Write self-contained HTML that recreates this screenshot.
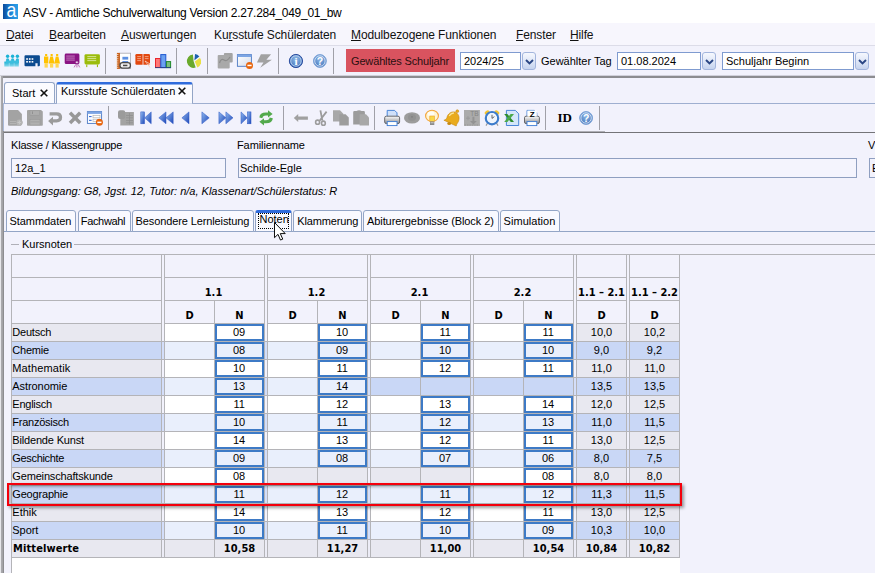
<!DOCTYPE html>
<html lang="de"><head><meta charset="utf-8"><title>ASV - Amtliche Schulverwaltung</title>
<style>
html,body{margin:0;padding:0;}
body{width:875px;height:573px;position:relative;overflow:hidden;background:#f2f2fc;font-family:"Liberation Sans",sans-serif;font-size:11px;color:#000;}
div{position:absolute;box-sizing:border-box;}
svg{position:absolute;overflow:visible;}
.t{white-space:nowrap;line-height:13px;height:13px;}
.m{white-space:nowrap;font-size:12px;line-height:14px;color:#111;letter-spacing:-0.12px;}
.m u{text-decoration-thickness:1px;text-underline-offset:1px;}
.b{white-space:nowrap;font-family:"DejaVu Sans Condensed","Liberation Sans",sans-serif;font-weight:bold;font-size:11px;line-height:13px;text-align:center;}
.c{white-space:nowrap;text-align:center;line-height:13px;font-size:11px;}
.sep{width:1px;background:#a0a0a8;}
</style></head><body>

<div style="left:0px;top:0px;width:875px;height:23px;background:#fff;"></div>
<div style="left:3px;top:4px;width:15px;height:15px;background:linear-gradient(90deg,#0b4c9c,#1f86d8 55%,#2ba0e6);"></div>
<div style="left:2.5px;top:-0.5px;width:17px;height:20px;color:#fff;font-size:21px;line-height:20px;text-align:center;transform:scaleX(0.84);">a</div>
<div class="t" style="left:23px;top:6px;font-size:12px;line-height:15px;height:15px;letter-spacing:-0.265px;color:#000;">ASV - Amtliche Schulverwaltung Version 2.27.284_049_01_bw</div>
<div style="left:0px;top:23px;width:875px;height:23px;background:#f7f6fd;"></div>
<div style="left:0px;top:45px;width:875px;height:1px;background:#dcdce8;"></div>
<div class="m" style="left:6px;top:28px;"><u>D</u>atei</div>
<div class="m" style="left:49px;top:28px;"><u>B</u>earbeiten</div>
<div class="m" style="left:121px;top:28px;"><u>A</u>uswertungen</div>
<div class="m" style="left:214px;top:28px;">Ku<u>r</u>sstufe Schülerdaten</div>
<div class="m" style="left:351px;top:28px;"><u>M</u>odulbezogene Funktionen</div>
<div class="m" style="left:516px;top:28px;"><u>F</u>enster</div>
<div class="m" style="left:570px;top:28px;"><u>H</u>ilfe</div>
<div style="left:0px;top:46px;width:875px;height:30px;background:#f2f2fc;"></div>
<div class="sep" style="left:105px;top:48px;width:1px;height:26px;"></div>
<div class="sep" style="left:176px;top:48px;width:1px;height:26px;"></div>
<div class="sep" style="left:207px;top:48px;width:1px;height:26px;"></div>
<div class="sep" style="left:278px;top:48px;width:1px;height:26px;"></div>
<div class="sep" style="left:333px;top:48px;width:1px;height:26px;"></div>
<svg style="left:0;top:0" width="875" height="80" viewBox="0 0 875 80"><defs><linearGradient id="gc" x1="0" y1="0" x2="0" y2="1"><stop offset="0" stop-color="#18afd4"/><stop offset="1" stop-color="#8fdaec"/></linearGradient><linearGradient id="gy" x1="0" y1="0" x2="0" y2="1"><stop offset="0" stop-color="#ffc200"/><stop offset="0.65" stop-color="#ffc200"/><stop offset="1" stop-color="#ffe38a"/></linearGradient><radialGradient id="gi" cx="0.5" cy="0.35" r="0.7"><stop offset="0" stop-color="#8db8e6"/><stop offset="1" stop-color="#3f6fb8"/></radialGradient><linearGradient id="gw" x1="0" y1="0" x2="1" y2="1"><stop offset="0" stop-color="#ffffff"/><stop offset="1" stop-color="#d4dcec"/></linearGradient><linearGradient id="gb" x1="0" y1="0" x2="1" y2="1"><stop offset="0" stop-color="#8fb8ee"/><stop offset="1" stop-color="#1f48b8"/></linearGradient><linearGradient id="gp" x1="0" y1="0" x2="0" y2="1"><stop offset="0" stop-color="#fdfdfd"/><stop offset="1" stop-color="#8a8a8e"/></linearGradient></defs><circle cx="7.6" cy="56.3" r="1.7" fill="#1cb2d6"/><circle cx="7.6" cy="59.9" r="1.6" fill="#2bb8da"/><circle cx="12.6" cy="56.3" r="1.7" fill="#1cb2d6"/><circle cx="12.6" cy="59.9" r="1.6" fill="#2bb8da"/><circle cx="17.4" cy="56.3" r="1.7" fill="#1cb2d6"/><circle cx="17.4" cy="59.9" r="1.6" fill="#2bb8da"/><rect x="4.3" y="61.6" width="4.6" height="5" fill="url(#gc)"/><rect x="9.3" y="61.6" width="4.6" height="5" fill="url(#gc)"/><rect x="14.2" y="61.6" width="4.6" height="5" fill="url(#gc)"/><rect x="5.8" y="60.5" width="13.2" height="2.4" fill="#3dbfde"/><path d="M25.6 55.2 H38.8 Q39.9 55.2 39.9 56.3 V65.2 Q39.9 66.3 38.8 66.3 H37.6 V63.2 H35.4 V66.3 H25.6 Q24.5 66.3 24.5 65.2 V56.3 Q24.5 55.2 25.6 55.2 Z" fill="#0c4b90"/><rect x="26.2" y="58.2" width="1.7" height="1.6" fill="#fff"/><rect x="28.9" y="58.2" width="1.7" height="1.6" fill="#fff"/><rect x="31.6" y="58.2" width="1.7" height="1.6" fill="#fff"/><rect x="26.2" y="61.0" width="1.7" height="1.6" fill="#fff"/><rect x="28.9" y="61.0" width="1.7" height="1.6" fill="#fff"/><rect x="31.6" y="61.0" width="1.7" height="1.6" fill="#fff"/><rect x="45.1" y="54" width="2.1" height="2" fill="#ffc200"/><rect x="50.6" y="54" width="2.1" height="2" fill="#ffc200"/><rect x="56.1" y="54" width="2.1" height="2" fill="#ffc200"/><rect x="44.0" y="56.5" width="4.3" height="6.6" fill="#ffc200"/><rect x="44.5" y="63.1" width="3.3" height="4.5" fill="#ffd650"/><path d="M50.3 56.5 H52.9 L54.5 63.4 H48.7 Z" fill="#ffc200"/><rect x="50" y="63.4" width="3.2" height="4.2" fill="#ffd650"/><path d="M55.8 56.5 H58.4 L60 63.4 H54.2 Z" fill="#ffc200"/><rect x="55.5" y="63.4" width="3.2" height="4.2" fill="#ffd650"/><rect x="64.7" y="53.5" width="14.7" height="10.6" rx="1.4" fill="#8a1383"/><rect x="66.2" y="55.6" width="8.6" height="0.9" fill="#c98ac6"/><rect x="66.2" y="57.6" width="8.6" height="0.9" fill="#c98ac6"/><rect x="66.2" y="59.6" width="8.6" height="0.9" fill="#c98ac6"/><circle cx="76.9" cy="62.3" r="1.3" fill="#f6e8f6" stroke="#8a1383" stroke-width="0.6"/><path d="M74 67.4 L75.9 64.2 H78 L79.8 67.4 M76.9 64.4 V67.4" fill="#f4e4f4" stroke="#9a309a" stroke-width="0.6"/><rect x="84.5" y="54.2" width="15.4" height="10.3" rx="1.4" fill="#9bbc0b"/><rect x="87.3" y="56.2" width="8.9" height="0.9" fill="#dbe8a4"/><rect x="87.3" y="58.2" width="8.9" height="0.9" fill="#dbe8a4"/><rect x="87.3" y="60.2" width="8.9" height="0.9" fill="#dbe8a4"/><rect x="86.2" y="64.5" width="1.1" height="2.6" fill="#9bbc0b"/><rect x="96.9" y="64.5" width="1.1" height="2.6" fill="#9bbc0b"/><rect x="119.6" y="53.2" width="11" height="15.4" fill="#fff" stroke="#a8a8b0" stroke-width="0.8"/><rect x="116.9" y="52.9" width="3" height="16" fill="#c9601c"/><rect x="116.2" y="54.2" width="2.2" height="0.8" fill="#f4e8dc"/><rect x="116.2" y="56.300000000000004" width="2.2" height="0.8" fill="#f4e8dc"/><rect x="116.2" y="58.400000000000006" width="2.2" height="0.8" fill="#f4e8dc"/><rect x="116.2" y="60.5" width="2.2" height="0.8" fill="#f4e8dc"/><rect x="116.2" y="62.6" width="2.2" height="0.8" fill="#f4e8dc"/><rect x="116.2" y="64.7" width="2.2" height="0.8" fill="#f4e8dc"/><rect x="116.2" y="66.80000000000001" width="2.2" height="0.8" fill="#f4e8dc"/><rect x="122.4" y="56.8" width="5.8" height="2.8" fill="#5d90e2"/><rect x="122.4" y="61" width="5.8" height="1.2" fill="#5d90e2"/><rect x="120" y="62.6" width="10.4" height="5.6" rx="2.4" fill="#f0f0f0" stroke="#4a4a4a" stroke-width="1.3"/><rect x="123" y="64.7" width="4.4" height="1.5" fill="#4a4a4a"/><path d="M136.6 54 H142.6 V64.7 H136.6 Q135.4 64.7 135.4 63.5 V55.2 Q135.4 54 136.6 54 Z" fill="#e2470f"/><path d="M143.4 54 H148.8 Q150 54 150 55.2 V63.5 Q150 64.7 148.8 64.7 H143.4 Z" fill="#e2470f"/><rect x="137.2" y="56.2" width="3.8" height="0.9" fill="#f4a98a"/><rect x="137.2" y="58.2" width="3.8" height="0.9" fill="#f4a98a"/><rect x="137.2" y="60.2" width="3.8" height="0.9" fill="#f4a98a"/><rect x="144.8" y="56.2" width="3.8" height="0.9" fill="#f4a98a"/><rect x="144.8" y="58.2" width="3.8" height="0.9" fill="#f4a98a"/><path d="M145 61 L150 67.6 L148.4 64.6 L150.2 64 Z" fill="#e2470f" stroke="#fbe0d4" stroke-width="0.7"/><rect x="155.5" y="58.5" width="4.8" height="9" fill="#f77" stroke="#e8262e" stroke-width="1"/><rect x="160.8" y="54.6" width="5" height="13" fill="#6aa0f0" stroke="#1d55d0" stroke-width="1"/><rect x="166.4" y="61.6" width="4.2" height="6" fill="#7dbd7d" stroke="#1f8a2a" stroke-width="1"/><rect x="155" y="67.2" width="16" height="0.9" fill="#263e86"/><path d="M193.6 61.2 L195.67 67.57 A6.7 6.7 0 1 1 192.90 54.54 Z" fill="#6aa92c"/><path d="M194.4 60.3 L195.06 54.03 A6.3 6.3 0 0 1 199.36 56.42 Z" fill="#1a5fad"/><path d="M194.8 61.6 L199.98 57.84 A6.4 6.4 0 0 1 197.40 67.45 Z" fill="#e9e043"/><rect x="223.9" y="53" width="8.8" height="9.6" rx="1" fill="#a4a4a4"/><rect x="217.7" y="55" width="12" height="13.4" rx="1" fill="#a9a9a9"/><path d="M219.5 63 Q221 58 224 60 T230 57" fill="none" stroke="#8c8c8c" stroke-width="1.2"/><rect x="237.4" y="54.6" width="14" height="11.7" fill="url(#gw)" stroke="#4a78c4" stroke-width="0.9"/><rect x="237.4" y="54.6" width="14" height="2.4" fill="#7da5e4"/><circle cx="249.5" cy="65.4" r="3.5" fill="#e8650d"/><rect x="247.4" y="64.7" width="4.2" height="1.5" fill="#fff"/><path d="M260.9 54.2 H271.1 L266.4 59.7 H271.9 L260.2 67.8 L263.5 62.6 H256.9 Z" fill="#a2a2a2"/><circle cx="295.95" cy="61" r="6.6" fill="url(#gi)" stroke="#2c4ea0" stroke-width="1"/><circle cx="295.95" cy="61" r="5.2" fill="none" stroke="#cfe0f6" stroke-width="0.7"/><text x="296" y="65" text-anchor="middle" font-family="Liberation Serif,serif" font-weight="bold" font-size="11" fill="#fff">i</text><circle cx="319.9" cy="61" r="6.4" fill="url(#gi)" stroke="#7aa2d8" stroke-width="1"/><circle cx="319.9" cy="61" r="5.2" fill="none" stroke="#e6effb" stroke-width="0.8"/><text x="319.9" y="65" text-anchor="middle" font-family="Liberation Sans,sans-serif" font-weight="bold" font-size="10.5" fill="#fff">?</text></svg>
<div style="left:346px;top:49px;width:109px;height:23px;background:#d9535f;"></div>
<div class="t" style="left:351px;top:55px;color:#2a1010;letter-spacing:-0.15px;">Gewähltes Schuljahr</div>
<div style="left:460px;top:52px;width:61px;height:18px;background:#fff;border:1px solid #7f9bd0;"></div>
<div class="t" style="left:464px;top:55px;">2024/25</div>
<div style="left:522px;top:52px;width:14px;height:18px;background:linear-gradient(#f6f8fe,#e2e9f8 45%,#c6d3ee);border:1px solid #a3b5dd;border-radius:3px;"></div>
<svg style="left:524.5px;top:58.5px" width="9" height="6" viewBox="0 0 9 6"><path d="M1 1 L4.5 4.4 L8 1" fill="none" stroke="#2b4684" stroke-width="1.9"/></svg>
<div class="t" style="left:541px;top:55px;">Gewählter Tag</div>
<div style="left:617px;top:52px;width:84px;height:18px;background:#fff;border:1px solid #7f9bd0;"></div>
<div class="t" style="left:621px;top:55px;">01.08.2024</div>
<div style="left:702px;top:52px;width:14px;height:18px;background:linear-gradient(#f6f8fe,#e2e9f8 45%,#c6d3ee);border:1px solid #a3b5dd;border-radius:3px;"></div>
<svg style="left:704.5px;top:58.5px" width="9" height="6" viewBox="0 0 9 6"><path d="M1 1 L4.5 4.4 L8 1" fill="none" stroke="#2b4684" stroke-width="1.9"/></svg>
<div style="left:722px;top:52px;width:132px;height:18px;background:#fff;border:1px solid #7f9bd0;"></div>
<div class="t" style="left:726px;top:55px;">Schuljahr Beginn</div>
<div style="left:855px;top:52px;width:14px;height:18px;background:linear-gradient(#f6f8fe,#e2e9f8 45%,#c6d3ee);border:1px solid #a3b5dd;border-radius:3px;"></div>
<svg style="left:857.5px;top:58.5px" width="9" height="6" viewBox="0 0 9 6"><path d="M1 1 L4.5 4.4 L8 1" fill="none" stroke="#2b4684" stroke-width="1.9"/></svg>
<div style="left:0px;top:75px;width:875px;height:1px;background:#d0d0da;"></div>
<div style="left:1px;top:76px;width:874px;height:2px;background:#8c8c90;"></div>
<div style="left:0px;top:76px;width:1px;height:497px;background:#e6e6ea;"></div>
<div style="left:1px;top:76px;width:1px;height:497px;background:#a8a8ac;"></div>
<div style="left:2px;top:76px;width:1px;height:497px;background:#a2a2a6;"></div>
<div style="left:3px;top:78px;width:1px;height:25px;background:#e4e4ee;"></div>
<div style="left:3px;top:78px;width:872px;height:25px;background:#f2f2fc;"></div>
<div style="left:4px;top:82px;width:51px;height:22px;background:#fbfbff;border:1px solid #93a5c6;border-bottom:none;border-radius:3px 3px 0 0;"></div>
<div class="t" style="left:12px;top:87px;font-size:11px;">Start</div>
<div style="left:56px;top:82px;width:137px;height:22px;background:#fbfbff;border:1px solid #93a5c6;border-top:2px solid #2f6bdc;border-bottom:none;border-radius:3px 3px 0 0;"></div>
<div style="left:57px;top:84px;width:135px;height:1px;background:#8fb0ee;"></div>
<div class="t" style="left:61px;top:85px;">Kursstufe Schülerdaten</div>
<svg style="left:40px;top:88.6px" width="8" height="8" viewBox="0 0 8 8"><path d="M0.7 0.7 L7.3 7.3 M7.3 0.7 L0.7 7.3" stroke="#111" stroke-width="1.6" fill="none"/></svg>
<svg style="left:178px;top:87px" width="8" height="8" viewBox="0 0 8 8"><path d="M0.7 0.7 L7.3 7.3 M7.3 0.7 L0.7 7.3" stroke="#111" stroke-width="1.6" fill="none"/></svg>
<div style="left:3px;top:103px;width:872px;height:1px;background:#9fafd0;"></div>
<div style="left:57px;top:103px;width:135px;height:1px;background:#d4dcee;"></div>
<div style="left:3px;top:104px;width:872px;height:27px;background:#f2f2fc;"></div>
<div style="left:3px;top:103px;width:1px;height:28px;background:#a9b9d9;"></div>
<div class="sep" style="left:108px;top:106px;width:1px;height:24px;"></div>
<div class="sep" style="left:283px;top:106px;width:1px;height:24px;"></div>
<div class="sep" style="left:374px;top:106px;width:1px;height:24px;"></div>
<div class="sep" style="left:545px;top:106px;width:1px;height:24px;"></div>
<div class="sep" style="left:599px;top:106px;width:1px;height:24px;"></div>
<svg style="left:0;top:100px" width="875" height="36" viewBox="0 100 875 36"><path d="M9 110 H18 L21.9 114 V120 Q22.6 121.5 22.6 122.6 Q22.6 124.5 21 125.7 H9 Q8 125.7 8 124.7 V111 Q8 110 9 110 Z" fill="#a3a3a3"/><circle cx="19.4" cy="122.5" r="3" fill="#b4b4b4"/><path d="M17.6 122.5 H21.2 M19.4 120.7 V124.3" stroke="#c8c8c8" stroke-width="1"/><rect x="10" y="121" width="6" height="0.8" fill="#b8b8b8"/><rect x="10" y="123" width="6" height="0.8" fill="#b8b8b8"/><path d="M28 110 H41 L42.8 111.6 V124.9 Q42.8 125.7 42 125.7 H27.8 Q27 125.7 27 124.9 V111 Q27 110 28 110 Z" fill="#a3a3a3"/><rect x="30" y="110.8" width="9.5" height="4.4" fill="#adadad" stroke="#979797" stroke-width="0.5"/><rect x="32" y="111.4" width="0.9" height="2.6" fill="#8e8e8e"/><rect x="30" y="119.6" width="10" height="5.4" fill="#b0b0b0" stroke="#979797" stroke-width="0.5"/><rect x="30.6" y="121.6" width="8.8" height="0.7" fill="#9a9a9a"/><path d="M49.6 113.8 H56.6 Q60.5 113.8 60.5 117.3 Q60.5 120.8 56.6 120.8 H52.5" fill="none" stroke="#9b9b9b" stroke-width="3.3"/><path d="M48.1 121 L53 116.8 V125.6 Z" fill="#9b9b9b"/><path d="M70 112.8 L80.2 123 M80.2 112.8 L70 123" stroke="#989898" stroke-width="3.5" fill="none"/><rect x="87.4" y="111.6" width="14.2" height="11.8" fill="#fbfcff" stroke="#4a78c4" stroke-width="0.9"/><rect x="87.4" y="111.6" width="14.2" height="2.3" fill="#7da5e4"/><rect x="89" y="116" width="2.6" height="1.1" fill="#3a6fd8"/><rect x="89" y="119.8" width="2.6" height="1.1" fill="#3a6fd8"/><rect x="93" y="115.4" width="7" height="2.4" fill="#fff" stroke="#aaa" stroke-width="0.6"/><rect x="93" y="119.2" width="5" height="2.4" fill="#fff" stroke="#aaa" stroke-width="0.6"/><circle cx="99.4" cy="122.3" r="3.5" fill="#e8650d"/><rect x="97.3" y="121.6" width="4.2" height="1.5" fill="#fff"/><rect x="120.3" y="112" width="13.6" height="13.5" fill="#a3a3a3"/><rect x="118" y="110.3" width="7.2" height="8.7" rx="2" fill="#9b9b9b"/><rect x="126" y="115" width="7" height="0.7" fill="#8f8f8f"/><rect x="126" y="117.5" width="7" height="0.7" fill="#8f8f8f"/><rect x="126" y="120" width="7" height="0.7" fill="#8f8f8f"/><rect x="126" y="122.5" width="7" height="0.7" fill="#8f8f8f"/><rect x="129" y="113" width="0.7" height="11.5" fill="#8f8f8f"/><rect x="140.8" y="111.9" width="3.7" height="11.9" fill="url(#gb)" stroke="#2a55c4" stroke-width="0.5"/><path d="M144.7 117.85 L151.2 111.9 V123.8 Z" fill="url(#gb)" stroke="#2a55c4" stroke-width="0.5"/><path d="M158.8 117.85 L166 111.9 V123.8 Z" fill="url(#gb)" stroke="#2a55c4" stroke-width="0.5"/><path d="M166 117.85 L173.2 111.9 V123.8 Z" fill="url(#gb)" stroke="#2a55c4" stroke-width="0.5"/><path d="M181.9 117.85 L189 111.9 V123.8 Z" fill="url(#gb)" stroke="#2a55c4" stroke-width="0.5"/><path d="M209.2 117.85 L201.9 111.9 V123.8 Z" fill="url(#gb)" stroke="#2a55c4" stroke-width="0.5"/><path d="M225.9 117.85 L218.9 111.9 V123.8 Z" fill="url(#gb)" stroke="#2a55c4" stroke-width="0.5"/><path d="M233 117.85 L225.9 111.9 V123.8 Z" fill="url(#gb)" stroke="#2a55c4" stroke-width="0.5"/><path d="M247.2 117.85 L241 111.9 V123.8 Z" fill="url(#gb)" stroke="#2a55c4" stroke-width="0.5"/><rect x="247.4" y="111.9" width="3.6" height="11.9" fill="url(#gb)" stroke="#2a55c4" stroke-width="0.5"/><path d="M259.4 117.6 Q259.6 112.6 266 112.6 H268 V110.3 L272.6 114 L268 117.6 V115.6 H266 Q262.6 115.6 262.4 118.2 Z" fill="#52a94c"/><path d="M272.8 118.2 Q272.6 123.2 266 123.2 H264 V125.5 L259.4 121.8 L264 118.2 V120.2 H266 Q269.4 120.2 269.6 117.6 Z" fill="#52a94c"/><path d="M293.8 118 L298.2 114 V116.4 H307.9 V119.8 H298.2 V121.9 Z" fill="#a0a0a0"/><path d="M320.4 110.4 L322.4 120.6 M326.6 111.6 L319.6 120.8" stroke="#9c9c9c" stroke-width="1.8" fill="none"/><ellipse cx="317.6" cy="122.2" rx="2" ry="2.1" fill="none" stroke="#9c9c9c" stroke-width="1.6"/><ellipse cx="323.4" cy="123.2" rx="1.9" ry="2.1" fill="none" stroke="#9c9c9c" stroke-width="1.6"/><path d="M333 110.2 H340 L343.1 113.4 V121.6 H333 Z" fill="#a8a8a8"/><path d="M339.3 114.2 H345.6 L348.8 117.4 V125.6 H339.3 Z" fill="#9d9d9d"/><path d="M354.4 111 H356.5 Q359 109.4 361.6 111 H363.7 Q364.9 111 364.9 112.2 V124.5 H353.2 V112.2 Q353.2 111 354.4 111 Z" fill="#9c9c9c"/><path d="M359.6 114.2 H366 L369 117.4 V125.6 H359.6 Z" fill="#a8a8a8"/><path d="M387.2 110.4 H394.59999999999997 L397.0 112.8 V117.5 H387.2 Z" fill="#cfe0fa" stroke="#3a7ad4" stroke-width="0.9"/><rect x="384.7" y="116.2" width="14.9" height="7.4" rx="1.6" fill="url(#gp)" stroke="#5a5a5e" stroke-width="0.9"/><rect x="387.2" y="121.6" width="9.8" height="4" fill="#fff" stroke="#3a7ad4" stroke-width="0.9"/><ellipse cx="412" cy="117.9" rx="8" ry="5.7" fill="#9c9c9c"/><ellipse cx="412" cy="117.4" rx="4" ry="3.4" fill="#929292"/><circle cx="412" cy="116.8" r="0.9" fill="#808080"/><ellipse cx="432" cy="115.9" rx="6.4" ry="5.7" fill="#fff4d2" stroke="#f2a53a" stroke-width="1.1"/><ellipse cx="431" cy="114" rx="3.4" ry="2.4" fill="#fffdf4"/><rect x="429.8" y="116" width="4.6" height="5.4" fill="#f8d848" stroke="#eda028" stroke-width="0.6"/><rect x="430" y="121.4" width="4.3" height="3.6" fill="#8c8c8c"/><rect x="430.6" y="122.4" width="3.1" height="0.8" fill="#d8d8d8"/><path d="M455.6 112.2 C451 110.8 447.6 114.2 447 117.4 C446.6 119 445.2 119.8 443.9 120.2 L456.2 126 C456.4 124.6 457 123.6 457.8 122.6 C459.8 119.4 459.8 114.6 455.6 112.2 Z" fill="#e9ab1e" stroke="#c8860c" stroke-width="0.6"/><circle cx="457.3" cy="111.2" r="1.4" fill="#e9ab1e" stroke="#c8860c" stroke-width="0.5"/><ellipse cx="449.2" cy="123.4" rx="1.9" ry="1.5" fill="#c88a14"/><path d="M449.2 116 Q450.6 113.2 454 112.8" stroke="#fbe69a" stroke-width="1.2" fill="none"/><rect x="464" y="110" width="15.9" height="15.9" fill="#ababab"/><text x="474.4" y="116.2" text-anchor="middle" font-family="Liberation Sans,sans-serif" font-size="6.5" fill="#858585">TB</text><path d="M472.4 116.8 V121 H470 L473.4 124.6 L476.8 121 H474.4 V116.8 Z" fill="#939393"/><path d="M466 118.2 H470 M468 116.2 V120.2" stroke="#989898" stroke-width="0.9"/><path d="M464.6 125 H479.4" stroke="#909090" stroke-width="0.8" stroke-dasharray="1.4 1"/><ellipse cx="487" cy="112.4" rx="2.6" ry="1.7" transform="rotate(-35 487 112.4)" fill="#f4c430"/><ellipse cx="497" cy="112.4" rx="2.6" ry="1.7" transform="rotate(35 497 112.4)" fill="#f4c430"/><path d="M487.6 123 L486 125.6 M496.4 123 L498 125.6" stroke="#9a9a9a" stroke-width="1.2"/><circle cx="492" cy="118.2" r="6.2" fill="#fff" stroke="#3d7ccc" stroke-width="2.2"/><circle cx="492" cy="118.2" r="4.6" fill="#eef4fc"/><path d="M492 114.8 V118.4 L494.4 116.6" stroke="#555" stroke-width="0.9" fill="none"/><path d="M506.4 110.4 H515.4 L518.7 113.8 V125.5 H506.4 Z" fill="#d4e6fa" stroke="#3a7ad4" stroke-width="0.9"/><path d="M504.2 114 H507.4 L514 122 H510.8 Z" fill="#2e8b2e"/><path d="M510.6 114 H514 L507.4 122 H504.2 Z" fill="#4aa84a"/><path d="M527 110.4 H534.4 L536.8 112.8 V117.5 H527 Z" fill="#cfe0fa" stroke="#3a7ad4" stroke-width="0.9"/><rect x="524.5" y="116.2" width="14.9" height="7.4" rx="1.6" fill="url(#gp)" stroke="#5a5a5e" stroke-width="0.9"/><rect x="527" y="121.6" width="9.8" height="4" fill="#fff" stroke="#3a7ad4" stroke-width="0.9"/><rect x="527.4" y="110.6" width="9.4" height="6" fill="#fff"/><text x="532.1" y="116.6" text-anchor="middle" font-family="Liberation Sans,sans-serif" font-weight="bold" font-size="8" fill="#000">Z</text><circle cx="586.1" cy="118" r="6.4" fill="url(#gi)" stroke="#7aa2d8" stroke-width="1"/><circle cx="586.1" cy="118" r="5.2" fill="none" stroke="#e6effb" stroke-width="0.8"/><text x="586.1" y="122" text-anchor="middle" font-family="Liberation Sans,sans-serif" font-weight="bold" font-size="10.5" fill="#fff">?</text></svg>
<div class="t" style="left:557.5px;top:111px;font-family:'Liberation Serif',serif;font-weight:bold;font-size:13px;line-height:14px;">ID</div>
<div style="left:3px;top:131px;width:602px;height:1px;background:#b0b0b6;"></div>
<div style="left:3px;top:132px;width:872px;height:1px;background:#747478;"></div>
<div style="left:3px;top:131px;width:1px;height:442px;background:#8c8c90;"></div>
<div class="t" style="left:11px;top:139px;letter-spacing:-0.2px;">Klasse / Klassengruppe</div>
<div class="t" style="left:237px;top:139px;letter-spacing:-0.1px;">Familienname</div>
<div class="t" style="left:868px;top:139px;">V</div>
<div style="left:11px;top:158px;width:215px;height:20px;border:1px solid #8f9fc0;background:#f4f4fd;"></div>
<div class="t" style="left:15px;top:162px;">12a_1</div>
<div style="left:238px;top:158px;width:619px;height:20px;border:1px solid #8f9fc0;background:#f4f4fd;"></div>
<div class="t" style="left:240px;top:162px;">Schilde-Egle</div>
<div style="left:869px;top:158px;width:10px;height:20px;border:1px solid #8f9fc0;background:#f2f2fc;"></div>
<div class="t" style="left:872px;top:162px;">E</div>
<div class="t" style="left:11px;top:185px;font-style:italic;">Bildungsgang: G8, Jgst. 12, Tutor: n/a, Klassenart/Schülerstatus: R</div>
<div style="left:4px;top:231px;width:871px;height:1px;background:#93a5c6;"></div>
<div style="left:6px;top:210px;width:70px;height:22px;background:#f9f9ff;border:1px solid #93a5c6;border-radius:3px 3px 0 0;"></div>
<div class="t" style="left:9.5px;top:215px;letter-spacing:-0.061px;">Stammdaten</div>
<div style="left:78px;top:210px;width:53px;height:22px;background:#f9f9ff;border:1px solid #93a5c6;border-radius:3px 3px 0 0;"></div>
<div class="t" style="left:80.8px;top:215px;letter-spacing:-0.337px;">Fachwahl</div>
<div style="left:132px;top:210px;width:122px;height:22px;background:#f9f9ff;border:1px solid #93a5c6;border-radius:3px 3px 0 0;"></div>
<div class="t" style="left:135.6px;top:215px;letter-spacing:-0.117px;">Besondere Lernleistung</div>
<div style="left:255px;top:210px;width:37px;height:22px;background:#f9f9ff;border:1px solid #93a5c6;border-top:3px solid #2f6bdc;border-radius:3px 3px 0 0;"></div>
<div style="left:258px;top:213px;width:31px;height:16px;border:1px dotted #000;"></div>
<div class="t" style="left:259.6px;top:213px;letter-spacing:-0.035px;">Noten</div>
<div style="left:293px;top:210px;width:69px;height:22px;background:#f9f9ff;border:1px solid #93a5c6;border-radius:3px 3px 0 0;"></div>
<div class="t" style="left:297.3px;top:215px;letter-spacing:-0.148px;">Klammerung</div>
<div style="left:363px;top:210px;width:136px;height:22px;background:#f9f9ff;border:1px solid #93a5c6;border-radius:3px 3px 0 0;"></div>
<div class="t" style="left:367px;top:215px;letter-spacing:-0.087px;">Abiturergebnisse (Block 2)</div>
<div style="left:500px;top:210px;width:60px;height:22px;background:#f9f9ff;border:1px solid #93a5c6;border-radius:3px 3px 0 0;"></div>
<div class="t" style="left:503.6px;top:215px;letter-spacing:0.042px;">Simulation</div>
<div style="left:11px;top:244px;width:8px;height:1px;background:#b0b0b8;"></div>
<div style="left:74px;top:244px;width:801px;height:1px;background:#b0b0b8;"></div>
<div class="t" style="left:22px;top:238px;">Kursnoten</div>
<div style="left:11px;top:254px;width:864px;height:1px;background:#b4b4b8;"></div>
<div style="left:11px;top:254px;width:1px;height:319px;background:#b4b4b8;"></div>
<div style="left:12px;top:558px;width:668px;height:15px;background:#fff;"></div>
<div style="left:12px;top:324px;width:149px;height:17px;background:#e8e8f0;"></div>
<div class="t" style="left:12.3px;top:326px;letter-spacing:-0.211px;">Deutsch</div>
<div style="left:165px;top:324px;width:49px;height:17px;background:#fff;"></div>
<div style="left:215px;top:324px;width:49px;height:17px;background:#fff;border:2px solid #3d7ac6;"></div>
<div class="c" style="left:214.6px;top:326px;width:49px;">09</div>
<div style="left:268px;top:324px;width:49px;height:17px;background:#fff;"></div>
<div style="left:318px;top:324px;width:49px;height:17px;background:#fff;border:2px solid #3d7ac6;"></div>
<div class="c" style="left:317.6px;top:326px;width:49px;">10</div>
<div style="left:371px;top:324px;width:49px;height:17px;background:#fff;"></div>
<div style="left:421px;top:324px;width:49px;height:17px;background:#fff;border:2px solid #3d7ac6;"></div>
<div class="c" style="left:420.6px;top:326px;width:49px;">11</div>
<div style="left:474px;top:324px;width:49px;height:17px;background:#fff;"></div>
<div style="left:524px;top:324px;width:49px;height:17px;background:#fff;border:2px solid #3d7ac6;"></div>
<div class="c" style="left:523.6px;top:326px;width:49px;">11</div>
<div style="left:577px;top:324px;width:49px;height:17px;background:#e8e8f0;"></div>
<div style="left:630px;top:324px;width:49px;height:17px;background:#e8e8f0;"></div>
<div class="c" style="left:577px;top:326px;width:49px;">10,0</div>
<div class="c" style="left:630px;top:326px;width:49px;">10,2</div>
<div style="left:12px;top:342px;width:667px;height:17px;background:#d3defa;"></div>
<div style="left:12px;top:342px;width:149px;height:17px;background:#c9d7f6;"></div>
<div class="t" style="left:12.3px;top:344px;letter-spacing:-0.234px;">Chemie</div>
<div style="left:165px;top:342px;width:49px;height:17px;background:#e9effc;"></div>
<div style="left:215px;top:342px;width:49px;height:17px;background:#e9effc;border:2px solid #3d7ac6;"></div>
<div class="c" style="left:214.6px;top:344px;width:49px;">08</div>
<div style="left:268px;top:342px;width:49px;height:17px;background:#e9effc;"></div>
<div style="left:318px;top:342px;width:49px;height:17px;background:#e9effc;border:2px solid #3d7ac6;"></div>
<div class="c" style="left:317.6px;top:344px;width:49px;">09</div>
<div style="left:371px;top:342px;width:49px;height:17px;background:#e9effc;"></div>
<div style="left:421px;top:342px;width:49px;height:17px;background:#e9effc;border:2px solid #3d7ac6;"></div>
<div class="c" style="left:420.6px;top:344px;width:49px;">10</div>
<div style="left:474px;top:342px;width:49px;height:17px;background:#e9effc;"></div>
<div style="left:524px;top:342px;width:49px;height:17px;background:#e9effc;border:2px solid #3d7ac6;"></div>
<div class="c" style="left:523.6px;top:344px;width:49px;">10</div>
<div style="left:577px;top:342px;width:49px;height:17px;background:#c9d7f6;"></div>
<div style="left:630px;top:342px;width:49px;height:17px;background:#c9d7f6;"></div>
<div class="c" style="left:577px;top:344px;width:49px;">9,0</div>
<div class="c" style="left:630px;top:344px;width:49px;">9,2</div>
<div style="left:12px;top:360px;width:149px;height:17px;background:#e8e8f0;"></div>
<div class="t" style="left:12.3px;top:362px;letter-spacing:0.123px;">Mathematik</div>
<div style="left:165px;top:360px;width:49px;height:17px;background:#fff;"></div>
<div style="left:215px;top:360px;width:49px;height:17px;background:#fff;border:2px solid #3d7ac6;"></div>
<div class="c" style="left:214.6px;top:362px;width:49px;">10</div>
<div style="left:268px;top:360px;width:49px;height:17px;background:#fff;"></div>
<div style="left:318px;top:360px;width:49px;height:17px;background:#fff;border:2px solid #3d7ac6;"></div>
<div class="c" style="left:317.6px;top:362px;width:49px;">11</div>
<div style="left:371px;top:360px;width:49px;height:17px;background:#fff;"></div>
<div style="left:421px;top:360px;width:49px;height:17px;background:#fff;border:2px solid #3d7ac6;"></div>
<div class="c" style="left:420.6px;top:362px;width:49px;">12</div>
<div style="left:474px;top:360px;width:49px;height:17px;background:#fff;"></div>
<div style="left:524px;top:360px;width:49px;height:17px;background:#fff;border:2px solid #3d7ac6;"></div>
<div class="c" style="left:523.6px;top:362px;width:49px;">11</div>
<div style="left:577px;top:360px;width:49px;height:17px;background:#e8e8f0;"></div>
<div style="left:630px;top:360px;width:49px;height:17px;background:#e8e8f0;"></div>
<div class="c" style="left:577px;top:362px;width:49px;">11,0</div>
<div class="c" style="left:630px;top:362px;width:49px;">11,0</div>
<div style="left:12px;top:378px;width:667px;height:17px;background:#d3defa;"></div>
<div style="left:12px;top:378px;width:149px;height:17px;background:#c9d7f6;"></div>
<div class="t" style="left:12.3px;top:380px;letter-spacing:-0.076px;">Astronomie</div>
<div style="left:165px;top:378px;width:49px;height:17px;background:#e9effc;"></div>
<div style="left:215px;top:378px;width:49px;height:17px;background:#e9effc;border:2px solid #3d7ac6;"></div>
<div class="c" style="left:214.6px;top:380px;width:49px;">13</div>
<div style="left:268px;top:378px;width:49px;height:17px;background:#e9effc;"></div>
<div style="left:318px;top:378px;width:49px;height:17px;background:#e9effc;border:2px solid #3d7ac6;"></div>
<div class="c" style="left:317.6px;top:380px;width:49px;">14</div>
<div style="left:371px;top:378px;width:99px;height:17px;background:#c9d7f6;"></div>
<div style="left:474px;top:378px;width:99px;height:17px;background:#c9d7f6;"></div>
<div style="left:577px;top:378px;width:49px;height:17px;background:#c9d7f6;"></div>
<div style="left:630px;top:378px;width:49px;height:17px;background:#c9d7f6;"></div>
<div class="c" style="left:577px;top:380px;width:49px;">13,5</div>
<div class="c" style="left:630px;top:380px;width:49px;">13,5</div>
<div style="left:12px;top:396px;width:149px;height:17px;background:#e8e8f0;"></div>
<div class="t" style="left:12.3px;top:398px;letter-spacing:-0.237px;">Englisch</div>
<div style="left:165px;top:396px;width:49px;height:17px;background:#fff;"></div>
<div style="left:215px;top:396px;width:49px;height:17px;background:#fff;border:2px solid #3d7ac6;"></div>
<div class="c" style="left:214.6px;top:398px;width:49px;">11</div>
<div style="left:268px;top:396px;width:49px;height:17px;background:#fff;"></div>
<div style="left:318px;top:396px;width:49px;height:17px;background:#fff;border:2px solid #3d7ac6;"></div>
<div class="c" style="left:317.6px;top:398px;width:49px;">12</div>
<div style="left:371px;top:396px;width:49px;height:17px;background:#fff;"></div>
<div style="left:421px;top:396px;width:49px;height:17px;background:#fff;border:2px solid #3d7ac6;"></div>
<div class="c" style="left:420.6px;top:398px;width:49px;">13</div>
<div style="left:474px;top:396px;width:49px;height:17px;background:#fff;"></div>
<div style="left:524px;top:396px;width:49px;height:17px;background:#fff;border:2px solid #3d7ac6;"></div>
<div class="c" style="left:523.6px;top:398px;width:49px;">14</div>
<div style="left:577px;top:396px;width:49px;height:17px;background:#e8e8f0;"></div>
<div style="left:630px;top:396px;width:49px;height:17px;background:#e8e8f0;"></div>
<div class="c" style="left:577px;top:398px;width:49px;">12,0</div>
<div class="c" style="left:630px;top:398px;width:49px;">12,5</div>
<div style="left:12px;top:414px;width:667px;height:17px;background:#d3defa;"></div>
<div style="left:12px;top:414px;width:149px;height:17px;background:#c9d7f6;"></div>
<div class="t" style="left:12.3px;top:416px;letter-spacing:-0.256px;">Französisch</div>
<div style="left:165px;top:414px;width:49px;height:17px;background:#e9effc;"></div>
<div style="left:215px;top:414px;width:49px;height:17px;background:#e9effc;border:2px solid #3d7ac6;"></div>
<div class="c" style="left:214.6px;top:416px;width:49px;">10</div>
<div style="left:268px;top:414px;width:49px;height:17px;background:#e9effc;"></div>
<div style="left:318px;top:414px;width:49px;height:17px;background:#e9effc;border:2px solid #3d7ac6;"></div>
<div class="c" style="left:317.6px;top:416px;width:49px;">11</div>
<div style="left:371px;top:414px;width:49px;height:17px;background:#e9effc;"></div>
<div style="left:421px;top:414px;width:49px;height:17px;background:#e9effc;border:2px solid #3d7ac6;"></div>
<div class="c" style="left:420.6px;top:416px;width:49px;">12</div>
<div style="left:474px;top:414px;width:49px;height:17px;background:#e9effc;"></div>
<div style="left:524px;top:414px;width:49px;height:17px;background:#e9effc;border:2px solid #3d7ac6;"></div>
<div class="c" style="left:523.6px;top:416px;width:49px;">13</div>
<div style="left:577px;top:414px;width:49px;height:17px;background:#c9d7f6;"></div>
<div style="left:630px;top:414px;width:49px;height:17px;background:#c9d7f6;"></div>
<div class="c" style="left:577px;top:416px;width:49px;">11,0</div>
<div class="c" style="left:630px;top:416px;width:49px;">11,5</div>
<div style="left:12px;top:432px;width:149px;height:17px;background:#e8e8f0;"></div>
<div class="t" style="left:12.3px;top:434px;letter-spacing:-0.169px;">Bildende Kunst</div>
<div style="left:165px;top:432px;width:49px;height:17px;background:#fff;"></div>
<div style="left:215px;top:432px;width:49px;height:17px;background:#fff;border:2px solid #3d7ac6;"></div>
<div class="c" style="left:214.6px;top:434px;width:49px;">14</div>
<div style="left:268px;top:432px;width:49px;height:17px;background:#fff;"></div>
<div style="left:318px;top:432px;width:49px;height:17px;background:#fff;border:2px solid #3d7ac6;"></div>
<div class="c" style="left:317.6px;top:434px;width:49px;">13</div>
<div style="left:371px;top:432px;width:49px;height:17px;background:#fff;"></div>
<div style="left:421px;top:432px;width:49px;height:17px;background:#fff;border:2px solid #3d7ac6;"></div>
<div class="c" style="left:420.6px;top:434px;width:49px;">12</div>
<div style="left:474px;top:432px;width:49px;height:17px;background:#fff;"></div>
<div style="left:524px;top:432px;width:49px;height:17px;background:#fff;border:2px solid #3d7ac6;"></div>
<div class="c" style="left:523.6px;top:434px;width:49px;">11</div>
<div style="left:577px;top:432px;width:49px;height:17px;background:#e8e8f0;"></div>
<div style="left:630px;top:432px;width:49px;height:17px;background:#e8e8f0;"></div>
<div class="c" style="left:577px;top:434px;width:49px;">13,0</div>
<div class="c" style="left:630px;top:434px;width:49px;">12,5</div>
<div style="left:12px;top:450px;width:667px;height:17px;background:#d3defa;"></div>
<div style="left:12px;top:450px;width:149px;height:17px;background:#c9d7f6;"></div>
<div class="t" style="left:12.3px;top:452px;letter-spacing:-0.336px;">Geschichte</div>
<div style="left:165px;top:450px;width:49px;height:17px;background:#e9effc;"></div>
<div style="left:215px;top:450px;width:49px;height:17px;background:#e9effc;border:2px solid #3d7ac6;"></div>
<div class="c" style="left:214.6px;top:452px;width:49px;">09</div>
<div style="left:268px;top:450px;width:49px;height:17px;background:#e9effc;"></div>
<div style="left:318px;top:450px;width:49px;height:17px;background:#e9effc;border:2px solid #3d7ac6;"></div>
<div class="c" style="left:317.6px;top:452px;width:49px;">08</div>
<div style="left:371px;top:450px;width:49px;height:17px;background:#e9effc;"></div>
<div style="left:421px;top:450px;width:49px;height:17px;background:#e9effc;border:2px solid #3d7ac6;"></div>
<div class="c" style="left:420.6px;top:452px;width:49px;">07</div>
<div style="left:474px;top:450px;width:49px;height:17px;background:#e9effc;"></div>
<div style="left:524px;top:450px;width:49px;height:17px;background:#e9effc;border:2px solid #3d7ac6;"></div>
<div class="c" style="left:523.6px;top:452px;width:49px;">06</div>
<div style="left:577px;top:450px;width:49px;height:17px;background:#c9d7f6;"></div>
<div style="left:630px;top:450px;width:49px;height:17px;background:#c9d7f6;"></div>
<div class="c" style="left:577px;top:452px;width:49px;">8,0</div>
<div class="c" style="left:630px;top:452px;width:49px;">7,5</div>
<div style="left:12px;top:468px;width:149px;height:17px;background:#e8e8f0;"></div>
<div class="t" style="left:12.3px;top:470px;letter-spacing:-0.161px;">Gemeinschaftskunde</div>
<div style="left:165px;top:468px;width:49px;height:17px;background:#fff;"></div>
<div style="left:215px;top:468px;width:49px;height:17px;background:#fff;border:2px solid #3d7ac6;"></div>
<div class="c" style="left:214.6px;top:470px;width:49px;">08</div>
<div style="left:268px;top:468px;width:99px;height:17px;background:#e8e8f0;"></div>
<div style="left:371px;top:468px;width:99px;height:17px;background:#e8e8f0;"></div>
<div style="left:474px;top:468px;width:49px;height:17px;background:#fff;"></div>
<div style="left:524px;top:468px;width:49px;height:17px;background:#fff;border:2px solid #3d7ac6;"></div>
<div class="c" style="left:523.6px;top:470px;width:49px;">08</div>
<div style="left:577px;top:468px;width:49px;height:17px;background:#e8e8f0;"></div>
<div style="left:630px;top:468px;width:49px;height:17px;background:#e8e8f0;"></div>
<div class="c" style="left:577px;top:470px;width:49px;">8,0</div>
<div class="c" style="left:630px;top:470px;width:49px;">8,0</div>
<div style="left:12px;top:486px;width:667px;height:17px;background:#d3defa;"></div>
<div style="left:12px;top:486px;width:149px;height:17px;background:#c9d7f6;"></div>
<div class="t" style="left:12.3px;top:488px;letter-spacing:-0.183px;">Geographie</div>
<div style="left:165px;top:486px;width:49px;height:17px;background:#e9effc;"></div>
<div style="left:215px;top:486px;width:49px;height:17px;background:#e9effc;border:2px solid #3d7ac6;"></div>
<div class="c" style="left:214.6px;top:488px;width:49px;">11</div>
<div style="left:268px;top:486px;width:49px;height:17px;background:#e9effc;"></div>
<div style="left:318px;top:486px;width:49px;height:17px;background:#e9effc;border:2px solid #3d7ac6;"></div>
<div class="c" style="left:317.6px;top:488px;width:49px;">12</div>
<div style="left:371px;top:486px;width:49px;height:17px;background:#e9effc;"></div>
<div style="left:421px;top:486px;width:49px;height:17px;background:#e9effc;border:2px solid #3d7ac6;"></div>
<div class="c" style="left:420.6px;top:488px;width:49px;">11</div>
<div style="left:474px;top:486px;width:49px;height:17px;background:#e9effc;"></div>
<div style="left:524px;top:486px;width:49px;height:17px;background:#e9effc;border:2px solid #3d7ac6;"></div>
<div class="c" style="left:523.6px;top:488px;width:49px;">12</div>
<div style="left:577px;top:486px;width:49px;height:17px;background:#c9d7f6;"></div>
<div style="left:630px;top:486px;width:49px;height:17px;background:#c9d7f6;"></div>
<div class="c" style="left:577px;top:488px;width:49px;">11,3</div>
<div class="c" style="left:630px;top:488px;width:49px;">11,5</div>
<div style="left:12px;top:504px;width:149px;height:17px;background:#e8e8f0;"></div>
<div class="t" style="left:12.3px;top:506px;letter-spacing:0.006px;">Ethik</div>
<div style="left:165px;top:504px;width:49px;height:17px;background:#fff;"></div>
<div style="left:215px;top:504px;width:49px;height:17px;background:#fff;border:2px solid #3d7ac6;"></div>
<div class="c" style="left:214.6px;top:506px;width:49px;">14</div>
<div style="left:268px;top:504px;width:49px;height:17px;background:#fff;"></div>
<div style="left:318px;top:504px;width:49px;height:17px;background:#fff;border:2px solid #3d7ac6;"></div>
<div class="c" style="left:317.6px;top:506px;width:49px;">13</div>
<div style="left:371px;top:504px;width:49px;height:17px;background:#fff;"></div>
<div style="left:421px;top:504px;width:49px;height:17px;background:#fff;border:2px solid #3d7ac6;"></div>
<div class="c" style="left:420.6px;top:506px;width:49px;">12</div>
<div style="left:474px;top:504px;width:49px;height:17px;background:#fff;"></div>
<div style="left:524px;top:504px;width:49px;height:17px;background:#fff;border:2px solid #3d7ac6;"></div>
<div class="c" style="left:523.6px;top:506px;width:49px;">11</div>
<div style="left:577px;top:504px;width:49px;height:17px;background:#e8e8f0;"></div>
<div style="left:630px;top:504px;width:49px;height:17px;background:#e8e8f0;"></div>
<div class="c" style="left:577px;top:506px;width:49px;">13,0</div>
<div class="c" style="left:630px;top:506px;width:49px;">12,5</div>
<div style="left:12px;top:522px;width:667px;height:17px;background:#d3defa;"></div>
<div style="left:12px;top:522px;width:149px;height:17px;background:#c9d7f6;"></div>
<div class="t" style="left:12.3px;top:524px;letter-spacing:-0.043px;">Sport</div>
<div style="left:165px;top:522px;width:49px;height:17px;background:#e9effc;"></div>
<div style="left:215px;top:522px;width:49px;height:17px;background:#e9effc;border:2px solid #3d7ac6;"></div>
<div class="c" style="left:214.6px;top:524px;width:49px;">10</div>
<div style="left:268px;top:522px;width:49px;height:17px;background:#e9effc;"></div>
<div style="left:318px;top:522px;width:49px;height:17px;background:#e9effc;border:2px solid #3d7ac6;"></div>
<div class="c" style="left:317.6px;top:524px;width:49px;">11</div>
<div style="left:371px;top:522px;width:49px;height:17px;background:#e9effc;"></div>
<div style="left:421px;top:522px;width:49px;height:17px;background:#e9effc;border:2px solid #3d7ac6;"></div>
<div class="c" style="left:420.6px;top:524px;width:49px;">10</div>
<div style="left:474px;top:522px;width:49px;height:17px;background:#e9effc;"></div>
<div style="left:524px;top:522px;width:49px;height:17px;background:#e9effc;border:2px solid #3d7ac6;"></div>
<div class="c" style="left:523.6px;top:524px;width:49px;">09</div>
<div style="left:577px;top:522px;width:49px;height:17px;background:#c9d7f6;"></div>
<div style="left:630px;top:522px;width:49px;height:17px;background:#c9d7f6;"></div>
<div class="c" style="left:577px;top:524px;width:49px;">10,3</div>
<div class="c" style="left:630px;top:524px;width:49px;">10,0</div>
<div style="left:12px;top:540px;width:667px;height:17px;background:#ececf6;"></div>
<div style="left:12px;top:540px;width:149px;height:17px;background:#e8e8f0;"></div>
<div class="b" style="left:13px;top:542px;letter-spacing:0.109px;text-align:left;">Mittelwerte</div>
<div style="left:165px;top:540px;width:99px;height:17px;background:#e8e8f0;"></div>
<div class="b" style="left:215px;top:542px;width:49px;">10,58</div>
<div style="left:268px;top:540px;width:99px;height:17px;background:#e8e8f0;"></div>
<div class="b" style="left:318px;top:542px;width:49px;">11,27</div>
<div style="left:371px;top:540px;width:99px;height:17px;background:#e8e8f0;"></div>
<div class="b" style="left:421px;top:542px;width:49px;">11,00</div>
<div style="left:474px;top:540px;width:99px;height:17px;background:#e8e8f0;"></div>
<div class="b" style="left:524px;top:542px;width:49px;">10,54</div>
<div style="left:577px;top:540px;width:49px;height:17px;background:#e8e8f0;"></div>
<div style="left:630px;top:540px;width:49px;height:17px;background:#e8e8f0;"></div>
<div class="b" style="left:577px;top:542px;width:49px;">10,84</div>
<div class="b" style="left:630px;top:542px;width:49px;">10,82</div>
<div style="left:161px;top:254px;width:1px;height:304px;background:#b4b4b8;"></div>
<div style="left:164px;top:254px;width:1px;height:304px;background:#b4b4b8;"></div>
<div style="left:264px;top:254px;width:1px;height:304px;background:#b4b4b8;"></div>
<div style="left:214px;top:300px;width:1px;height:258px;background:#b4b4b8;"></div>
<div style="left:267px;top:254px;width:1px;height:304px;background:#b4b4b8;"></div>
<div style="left:367px;top:254px;width:1px;height:304px;background:#b4b4b8;"></div>
<div style="left:317px;top:300px;width:1px;height:258px;background:#b4b4b8;"></div>
<div style="left:370px;top:254px;width:1px;height:304px;background:#b4b4b8;"></div>
<div style="left:470px;top:254px;width:1px;height:304px;background:#b4b4b8;"></div>
<div style="left:420px;top:300px;width:1px;height:258px;background:#b4b4b8;"></div>
<div style="left:473px;top:254px;width:1px;height:304px;background:#b4b4b8;"></div>
<div style="left:573px;top:254px;width:1px;height:304px;background:#b4b4b8;"></div>
<div style="left:523px;top:300px;width:1px;height:258px;background:#b4b4b8;"></div>
<div style="left:576px;top:254px;width:1px;height:304px;background:#b4b4b8;"></div>
<div style="left:626px;top:254px;width:1px;height:304px;background:#b4b4b8;"></div>
<div style="left:629px;top:254px;width:1px;height:304px;background:#b4b4b8;"></div>
<div style="left:679px;top:254px;width:1px;height:304px;background:#b4b4b8;"></div>
<div style="left:11px;top:277px;width:151px;height:1px;background:#b4b4b8;"></div>
<div style="left:164px;top:277px;width:101px;height:1px;background:#b4b4b8;"></div>
<div style="left:267px;top:277px;width:101px;height:1px;background:#b4b4b8;"></div>
<div style="left:370px;top:277px;width:101px;height:1px;background:#b4b4b8;"></div>
<div style="left:473px;top:277px;width:101px;height:1px;background:#b4b4b8;"></div>
<div style="left:576px;top:277px;width:51px;height:1px;background:#b4b4b8;"></div>
<div style="left:629px;top:277px;width:51px;height:1px;background:#b4b4b8;"></div>
<div style="left:11px;top:300px;width:151px;height:1px;background:#b4b4b8;"></div>
<div style="left:164px;top:300px;width:101px;height:1px;background:#b4b4b8;"></div>
<div style="left:267px;top:300px;width:101px;height:1px;background:#b4b4b8;"></div>
<div style="left:370px;top:300px;width:101px;height:1px;background:#b4b4b8;"></div>
<div style="left:473px;top:300px;width:101px;height:1px;background:#b4b4b8;"></div>
<div style="left:576px;top:300px;width:51px;height:1px;background:#b4b4b8;"></div>
<div style="left:629px;top:300px;width:51px;height:1px;background:#b4b4b8;"></div>
<div style="left:11px;top:323px;width:151px;height:1px;background:#b4b4b8;"></div>
<div style="left:164px;top:323px;width:101px;height:1px;background:#b4b4b8;"></div>
<div style="left:267px;top:323px;width:101px;height:1px;background:#b4b4b8;"></div>
<div style="left:370px;top:323px;width:101px;height:1px;background:#b4b4b8;"></div>
<div style="left:473px;top:323px;width:101px;height:1px;background:#b4b4b8;"></div>
<div style="left:576px;top:323px;width:51px;height:1px;background:#b4b4b8;"></div>
<div style="left:629px;top:323px;width:51px;height:1px;background:#b4b4b8;"></div>
<div style="left:11px;top:341px;width:669px;height:1px;background:#b4b4b8;"></div>
<div style="left:11px;top:359px;width:669px;height:1px;background:#b4b4b8;"></div>
<div style="left:11px;top:377px;width:669px;height:1px;background:#b4b4b8;"></div>
<div style="left:11px;top:395px;width:669px;height:1px;background:#b4b4b8;"></div>
<div style="left:11px;top:413px;width:669px;height:1px;background:#b4b4b8;"></div>
<div style="left:11px;top:431px;width:669px;height:1px;background:#b4b4b8;"></div>
<div style="left:11px;top:449px;width:669px;height:1px;background:#b4b4b8;"></div>
<div style="left:11px;top:467px;width:669px;height:1px;background:#b4b4b8;"></div>
<div style="left:11px;top:485px;width:669px;height:1px;background:#b4b4b8;"></div>
<div style="left:11px;top:503px;width:669px;height:1px;background:#b4b4b8;"></div>
<div style="left:11px;top:521px;width:669px;height:1px;background:#b4b4b8;"></div>
<div style="left:11px;top:539px;width:669px;height:1px;background:#b4b4b8;"></div>
<div style="left:11px;top:557px;width:669px;height:1px;background:#b4b4b8;"></div>
<div class="b" style="left:163px;top:286px;width:101px;">1.1</div>
<div class="b" style="left:164px;top:309px;width:51px;">D</div>
<div class="b" style="left:214px;top:309px;width:51px;">N</div>
<div class="b" style="left:266px;top:286px;width:101px;">1.2</div>
<div class="b" style="left:267px;top:309px;width:51px;">D</div>
<div class="b" style="left:317px;top:309px;width:51px;">N</div>
<div class="b" style="left:369px;top:286px;width:101px;">2.1</div>
<div class="b" style="left:370px;top:309px;width:51px;">D</div>
<div class="b" style="left:420px;top:309px;width:51px;">N</div>
<div class="b" style="left:472px;top:286px;width:101px;">2.2</div>
<div class="b" style="left:473px;top:309px;width:51px;">D</div>
<div class="b" style="left:523px;top:309px;width:51px;">N</div>
<div class="b" style="left:576px;top:286px;width:51px;">1.1 – 2.1</div>
<div class="b" style="left:629px;top:286px;width:51px;">1.1 – 2.2</div>
<div class="b" style="left:576px;top:309px;width:51px;">D</div>
<div class="b" style="left:629px;top:309px;width:51px;">D</div>
<div style="left:7px;top:483px;width:675px;height:23px;border:2px solid #f4000c;box-shadow:2px 2px 3px rgba(0,0,0,.38), inset 2px 2px 3px rgba(0,0,0,.28);"></div>
<svg style="left:274px;top:222px" width="12.4" height="19" viewBox="0 0 13 20"><path d="M0.5 0.5 V16.5 L4.2 13 L6.8 19 L9.2 18 L6.6 12.2 H11.8 Z" fill="#fff" stroke="#000" stroke-width="1"/></svg>
</body></html>
